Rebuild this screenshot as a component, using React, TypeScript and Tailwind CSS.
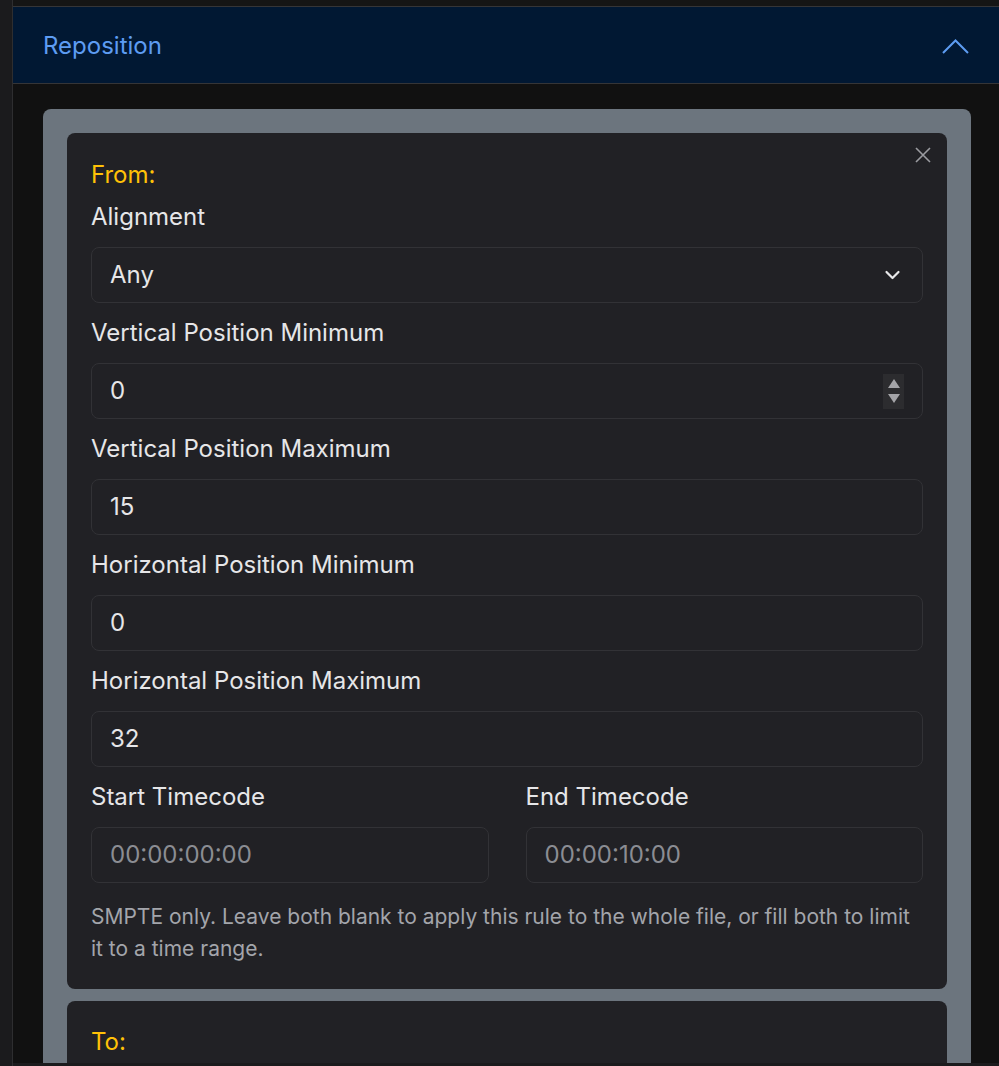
import React from 'react';

// Reposition rule editor panel (dark theme)

const FONT = { fontFamily: 'Inter, "Noto Sans", sans-serif' };

function CloseIcon() {
  return (
    <svg width="16" height="16" viewBox="0 0 16 16" fill="none" stroke="#9a9ba0" strokeWidth="1.6">
      <path d="M1 1l14 14M15 1L1 15" />
    </svg>
  );
}

function SelectChevron() {
  return (
    <svg width="17" height="12" viewBox="0 0 16 12" fill="none" stroke="#e8e8ea" strokeWidth="2.2" strokeLinecap="round" strokeLinejoin="round">
      <path d="M2 3l6 6 6-6" />
    </svg>
  );
}

function Spinner() {
  return (
    <div className="flex h-[35px] w-[21px] flex-col items-center justify-center gap-[6px] bg-[#2c2c2f]">
      <svg width="12" height="9" viewBox="0 0 12 9"><path d="M6 0l6 9H0z" fill="#a4a4a8" /></svg>
      <svg width="12" height="9" viewBox="0 0 12 9"><path d="M0 0h12L6 9z" fill="#a4a4a8" /></svg>
    </div>
  );
}

type FieldProps = { label: string; value?: string; placeholder?: string; spinner?: boolean; select?: boolean };

function Field({ label, value, placeholder, spinner, select }: FieldProps) {
  return (
    <div className="flex flex-col">
      <label className="mb-[15px] text-[24px] leading-[30px] text-[#e6e6e8]">{label}</label>
      <div className={`flex h-[56px] items-center justify-between rounded-[8px] border border-[#323236] bg-[#212125] pl-[18px] ${select ? 'pr-[21px]' : 'pr-[18px]'}`}>
        {value !== undefined ? (
          <span className="text-[24px] text-[#e6e6e8]">{value}</span>
        ) : (
          <span className="text-[24px] text-[#8b8d93]">{placeholder}</span>
        )}
        {select && <SelectChevron />}
        {spinner && <Spinner />}
      </div>
    </div>
  );
}

export default function App() {
  return (
    <div className="flex h-[1066px] w-[999px] overflow-hidden bg-[#111111]" style={FONT}>
      {/* side rail */}
      <div className="w-[13px] shrink-0 border-r border-[#2e2e30] bg-[#1b1b1d]" />

      <div className="flex min-w-0 flex-1 flex-col">
        <div className="h-[7px] shrink-0 border-b border-[#353537] bg-[#151515]" />

        {/* accordion header */}
        <div className="flex h-[77px] shrink-0 items-center justify-between border-b border-[#353537] bg-[#011833] pl-[30px] pr-[30px] pt-[2px]">
          <span className="text-[24px] text-[#5d9cf2]">Reposition</span>
          <svg width="27" height="15" viewBox="0 0 27 15" fill="none" stroke="#5d9cf2" strokeWidth="2">
            <path d="M1 14L13.5 1.5 26 14" />
          </svg>
        </div>

        {/* body */}
        <div className="min-h-0 flex-1 overflow-hidden pl-[30px] pr-[28px] pt-[25px]">
          <div className="flex flex-col gap-[12px] rounded-t-[8px] bg-[#6c757e] px-[24px] pt-[24px]">
            {/* From card */}
            <div className="relative rounded-[8px] bg-[#212125] px-[24px] pb-[24px] pt-[27px]">
              <button className="absolute right-[16px] top-[14px] p-0">
                <CloseIcon />
              </button>
              <div className="text-[24px] leading-[30px] text-[#ffc107]">From:</div>
              <div className="mt-[12px] flex flex-col gap-[15px]">
                <Field label="Alignment" value="Any" select />
                <Field label="Vertical Position Minimum" value="0" spinner />
                <Field label="Vertical Position Maximum" value="15" />
                <Field label="Horizontal Position Minimum" value="0" />
                <Field label="Horizontal Position Maximum" value="32" />
                <div className="grid grid-cols-2 gap-[37px]">
                  <Field label="Start Timecode" placeholder="00:00:00:00" />
                  <Field label="End Timecode" placeholder="00:00:10:00" />
                </div>
              </div>
              <p className="mt-[18px] text-[21px] leading-[32px] text-[#a3a5ab]">
                SMPTE only. Leave both blank to apply this rule to the whole file, or fill both to limit it to a time range.
              </p>
            </div>

            {/* To card */}
            <div className="h-[200px] rounded-[8px] bg-[#212125] px-[24px] pt-[26px]">
              <div className="text-[24px] leading-[30px] text-[#ffc107]">To:</div>
            </div>
          </div>
        </div>

        <div className="h-[3px] shrink-0 bg-[#1b1b1d]" />
      </div>
    </div>
  );
}
